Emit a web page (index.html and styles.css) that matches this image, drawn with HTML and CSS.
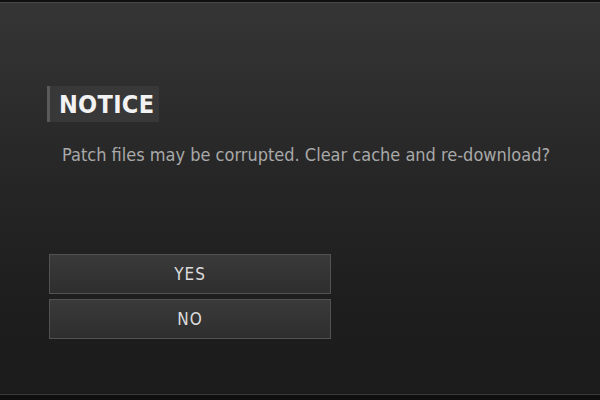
FILE: index.html
```html
<!DOCTYPE html>
<html lang="en">
<head>
  <meta charset="UTF-8" />
  <title>Notice</title>
  <link rel="stylesheet" href="styles.css">
</head>
<body>
  <div class="screen">
    <div class="dialog">
      <div class="title-row">
        <h1 class="title">NOTICE</h1>
      </div>
      <p class="message">Patch files may be corrupted. Clear cache and re-download?</p>
      <div class="actions">
        <button class="btn">YES</button>
        <button class="btn">NO</button>
      </div>
    </div>
  </div>
</body>
</html>
```

FILE: styles.css
```css
* {
  box-sizing: border-box;
}

html, body {
  margin: 0;
  padding: 0;
  width: 100%;
  height: 100%;
  background: #cfcfcf;
  font-family: 'DejaVu Sans Condensed', 'DejaVu Sans', sans-serif;
}

.screen {
  height: 400px;
  padding-top: 2px;
  padding-bottom: 2px;
  background: #0f0f0f;
}

.dialog {
  height: 393px;
  border-top: 1px solid #474747;
  border-bottom: 1px solid #3a3a3a;
  background: linear-gradient(to bottom, #353535 0%, #303030 15%, #262626 45%, #1e1e1e 75%, #1b1b1b 100%);
  padding: 83px 0 0 47px;
}

.title-row {
  display: flex;
}

.title {
  margin: 0;
  height: 36px;
  padding: 0 5px 0 9px;
  border-left: 3px solid #5a5a5a;
  background: #383838;
  color: #f2f2f2;
  font-size: 25px;
  font-weight: bold;
  line-height: 37px;
  letter-spacing: 0.3px;
}

.message {
  margin: 22px 0 0 15px;
  color: #a9a9a9;
  font-size: 18px;
  line-height: 22px;
}

.actions {
  display: flex;
  flex-direction: column;
  gap: 5px;
  width: 282px;
  margin-top: 88px;
  margin-left: 2px;
}

.btn {
  height: 40px;
  border: 1px solid #525252;
  background: linear-gradient(to bottom, #3a3a3a, #2e2e2e);
  color: #dcdcdc;
  font-family: inherit;
  font-size: 17px;
  letter-spacing: 1px;
  padding: 0;
}
```
